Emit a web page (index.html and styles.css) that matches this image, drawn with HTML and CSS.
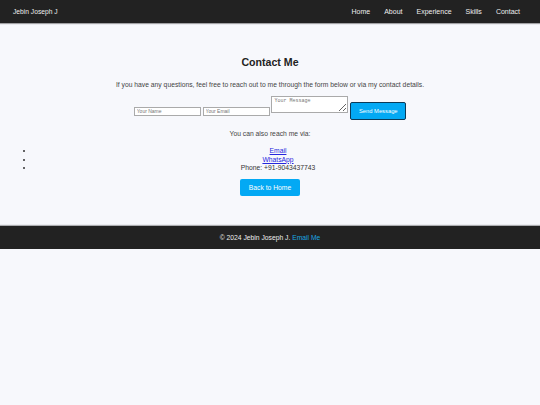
FILE: index.html
```html
<!DOCTYPE html>
<html>
<head>
<meta charset="utf-8">
<link rel="stylesheet" href="styles.css">
</head>
<body>
<header class="topbar">
  <div class="brand">Jebin Joseph J</div>
  <nav class="nav">
    <a href="#">Home</a>
    <a href="#">About</a>
    <a href="#">Experience</a>
    <a href="#">Skills</a>
    <a href="#">Contact</a>
  </nav>
</header>
<main class="content">
  <h1 class="title">Contact Me</h1>
  <p class="intro">If you have any questions, feel free to reach out to me through the form below or via my contact details.</p>
  <form class="form">
    <input class="field" type="text" placeholder="Your Name">
    <input class="field" type="email" placeholder="Your Email">
    <textarea class="msg" placeholder="Your Message"></textarea>
    <button class="send" type="button">Send Message</button>
  </form>
  <p class="also">You can also reach me via:</p>
  <ul class="links">
    <li><a href="#">Email</a></li>
    <li><a href="#">WhatsApp</a></li>
    <li>Phone: +91-9043437743</li>
  </ul>
  <div class="back-wrap"><a class="back" href="#">Back to Home</a></div>
</main>
<footer class="footer">
  <span>© 2024 Jebin Joseph J. <a href="#">Email Me</a></span>
</footer>
</body>
</html>
```
FILE: styles.css
```css
html, body {
  margin: 0;
  padding: 0;
  background: #f7f8fc;
  font-family: "Liberation Sans", Arial, sans-serif;
  color: #333;
}
.topbar {
  height: 23px;
  background: #222;
  display: flex;
  align-items: center;
  justify-content: space-between;
  padding: 0 20px 0 13px;
  box-shadow: 0 1px 1px rgba(0,0,0,0.35);
}
.brand {
  color: #eee;
  font-size: 6.7px;
}
.nav {
  display: flex;
  gap: 14px;
}
.nav a {
  color: #eee;
  text-decoration: none;
  font-size: 7px;
}
.content {
  padding: 33px 0 30px;
  text-align: center;
}
.title {
  font-size: 10.6px;
  font-weight: bold;
  color: #222;
  margin: 0 0 13px;
}
.intro {
  font-size: 6.75px;
  color: #444;
  margin: 0 0 8px;
}
.form {
  margin: 0 0 10px;
  font-size: 6.6px;
}
.field {
  width: 61px;
  height: 7px;
  font-size: 5px;
  padding: 0 2px;
  border: 1px solid #aaa;
  background: #fff;
  margin: 0;
  font-family: "Liberation Sans", Arial, sans-serif;
}
.msg {
  width: 71px;
  height: 13px;
  font-size: 5px;
  padding: 1px 2px;
  border: 1px solid #aaa;
  margin: 0;
  font-family: "Liberation Mono", monospace;
  vertical-align: baseline;
}
.send {
  width: 56px;
  height: 18px;
  background: #03a9f4;
  color: #fff;
  border: 1px solid #0b3a57;
  border-radius: 2px;
  font-size: 5.8px;
  font-family: "Liberation Sans", Arial, sans-serif;
  margin: 0;
  padding: 0;
}
.also {
  font-size: 6.75px;
  color: #444;
  margin: 0 0 10px;
}
.links {
  margin: 0 0 3px;
  padding: 0 18px 0 34px;
  font-size: 6.75px;
  color: #333;
}
.links li {
  line-height: 8.5px;
}
.links a {
  color: #2626dd;
}
.back {
  display: inline-block;
  background: #03a9f4;
  color: #fff;
  text-decoration: none;
  font-size: 6.75px;
  padding: 0 9px;
  line-height: 17px;
  border-radius: 2px;
}
.footer {
  height: 23px;
  background: #222;
  display: flex;
  align-items: center;
  justify-content: center;
  color: #eee;
  font-size: 6.75px;
  box-shadow: 0 -1px 1px rgba(0,0,0,0.3), 0 1px 1px rgba(0,0,0,0.5);
}
.footer a {
  color: #1ba6e0;
  text-decoration: none;
}
```
